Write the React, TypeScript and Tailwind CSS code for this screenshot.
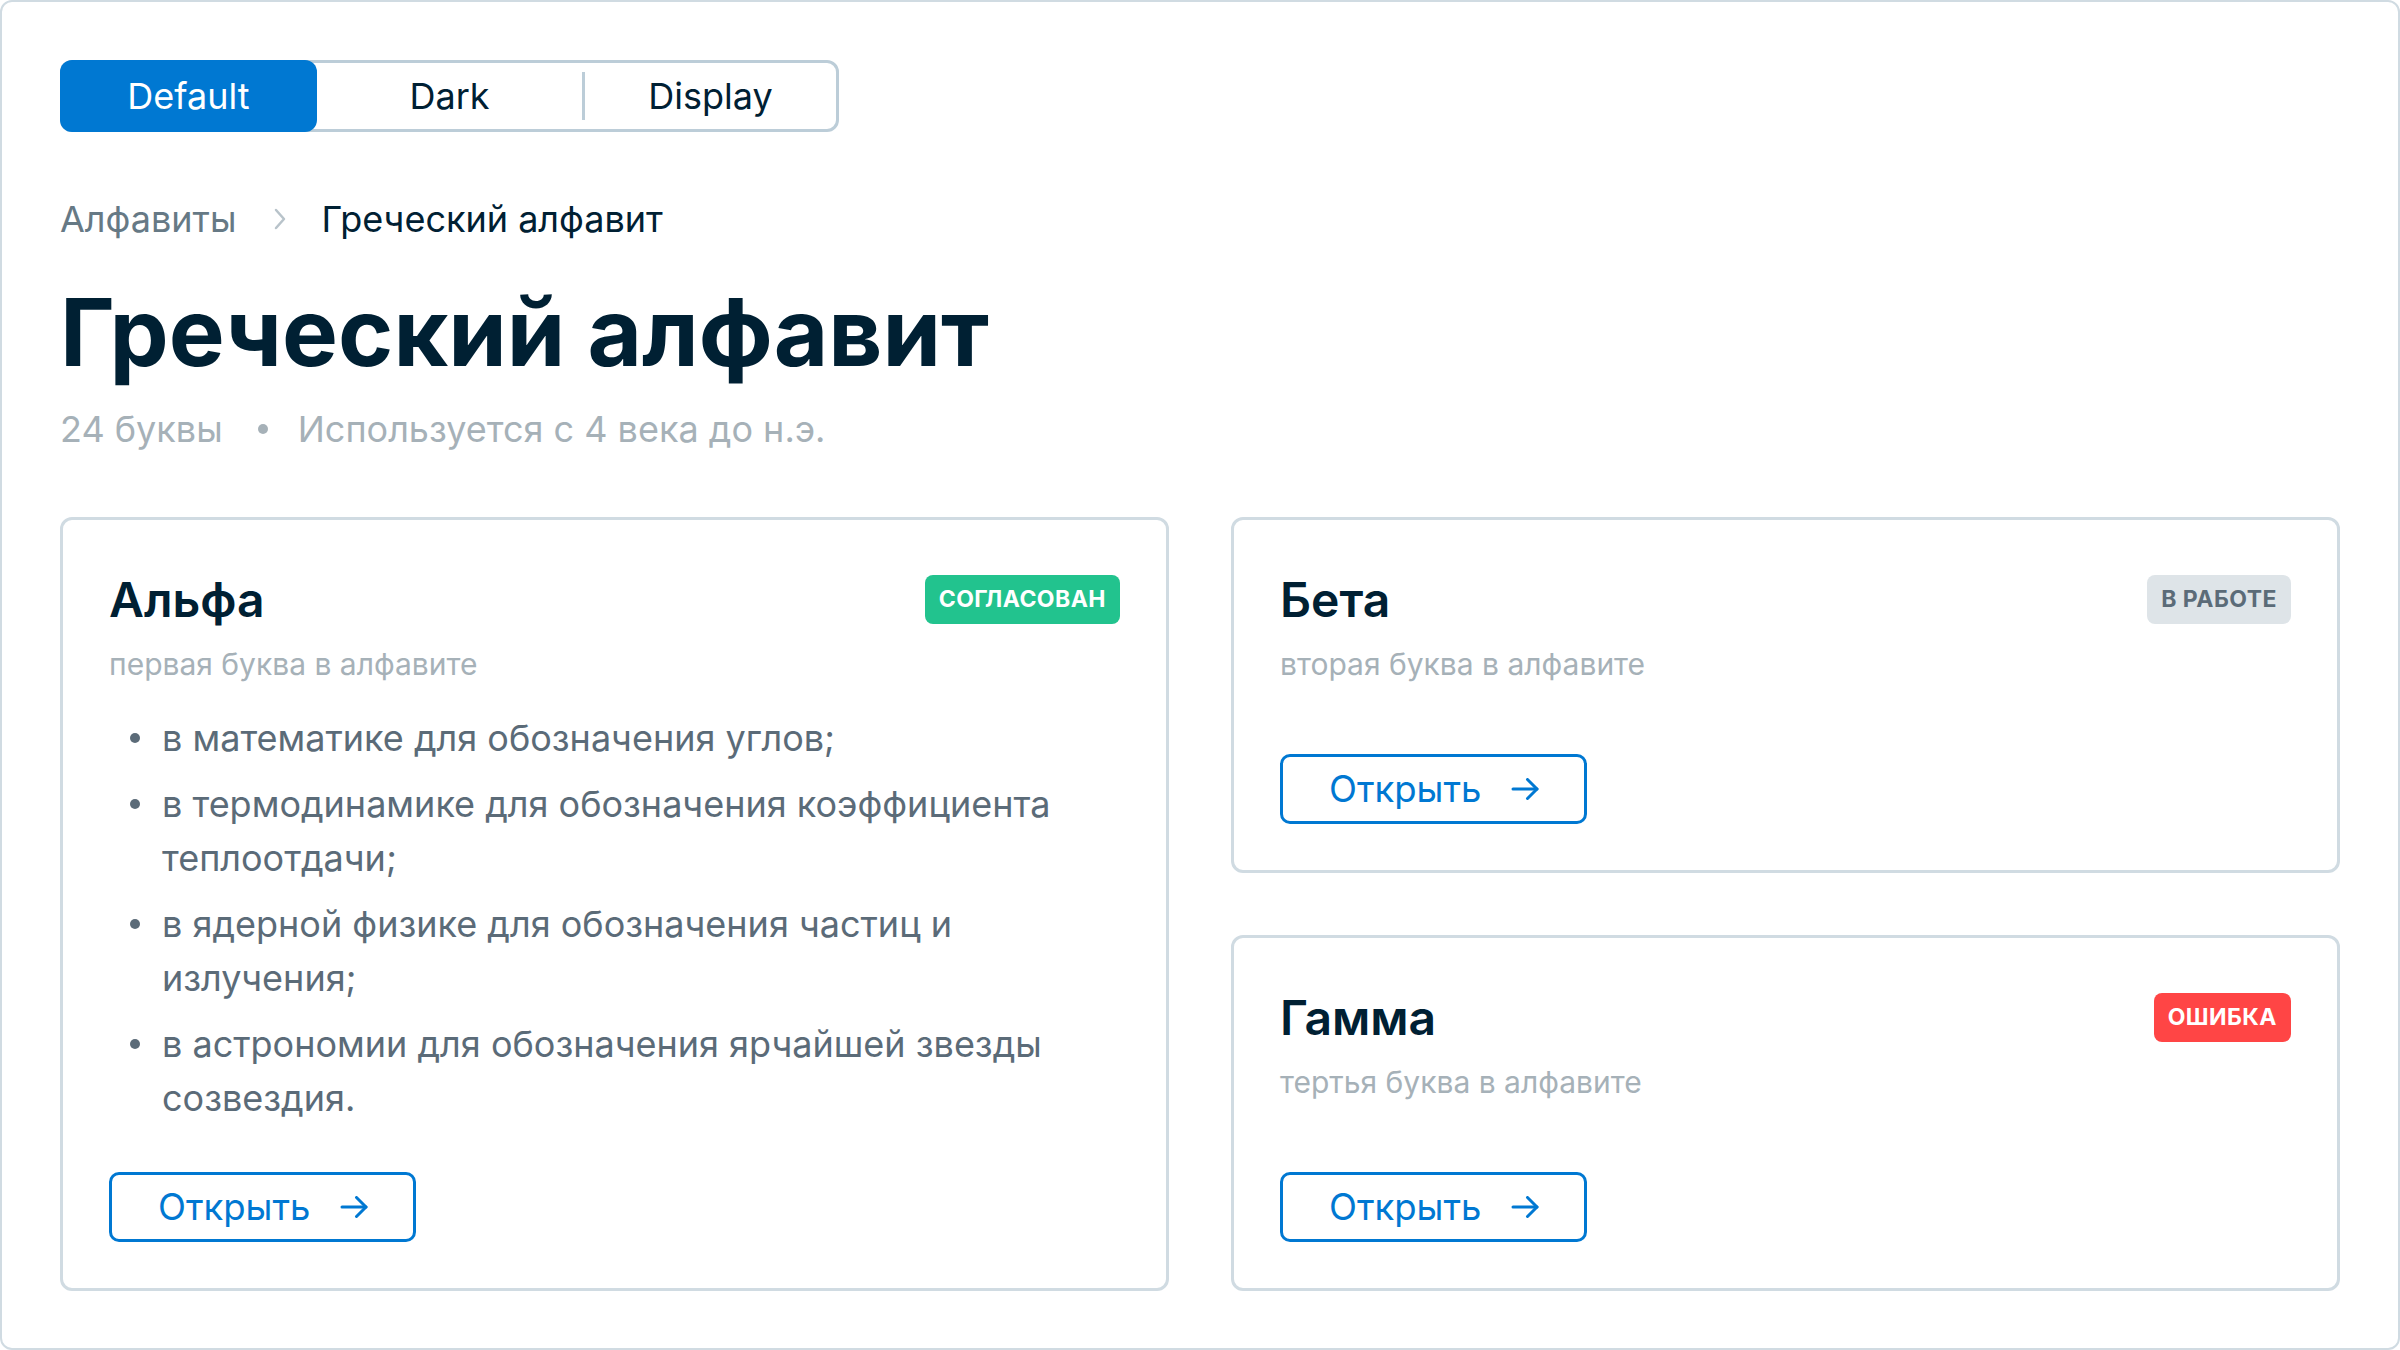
import React from 'react';

type Status = 'ok' | 'work' | 'error';

const badgeStyles: Record<Status, string> = {
  ok: 'bg-[#22c38e] text-white',
  work: 'bg-[#dee4e8] text-[#5b6b78]',
  error: 'bg-[#ff4545] text-white',
};

function Badge({ status, children }: { status: Status; children: React.ReactNode }) {
  return (
    <span
      className={`flex h-[49px] items-center rounded-[8px] px-[14px] text-[23px] font-bold uppercase tracking-[0.02em] ${badgeStyles[status]}`}
    >
      {children}
    </span>
  );
}

function ArrowIcon() {
  return (
    <svg width="28" height="22" viewBox="0 0 28 22" fill="none" stroke="currentColor" strokeWidth="3" strokeLinecap="round" strokeLinejoin="round">
      <path d="M2 11H26" />
      <path d="M16.5 1.5L26 11L16.5 20.5" />
    </svg>
  );
}

function OpenButton({ className = '' }: { className?: string }) {
  return (
    <button
      className={`flex h-[70px] w-fit items-center gap-[30px] rounded-[10px] border-[3px] border-[#0078d2] pl-[46px] pr-[45px] text-[36.5px] text-[#0078d2] ${className}`}
    >
      <span>Открыть</span>
      <ArrowIcon />
    </button>
  );
}

function CardHeader({ title, subtitle, status, label }: { title: string; subtitle: string; status: Status; label: string }) {
  return (
    <>
      <div className="flex items-center justify-between">
        <h2 className="text-[48px] font-semibold leading-[67px] text-[#002033]">{title}</h2>
        <Badge status={status}>{label}</Badge>
      </div>
      <p className="mt-[10px] text-[30px] leading-[42px] text-[#a6b1b8]">{subtitle}</p>
    </>
  );
}

const uses = [
  'в математике для обозначения углов;',
  'в термодинамике для обозначения коэффициента теплоотдачи;',
  'в ядерной физике для обозначения частиц и излучения;',
  'в астрономии для обозначения ярчайшей звезды созвездия.',
];

export default function App() {
  return (
    <div className="h-[1350px] w-[2400px] rounded-[12px] border-2 border-[#d0dbe2] bg-white px-[58px] pt-[58px] font-['Inter',sans-serif]">
      {/* Theme switch */}
      <div className="flex h-[72px] w-[779px] items-center rounded-[12px] border-[3px] border-[#bccdd8]">
        <button className="-my-[3px] -ml-[3px] flex h-[72px] w-[257px] items-center justify-center rounded-[12px] bg-[#0078d2] text-[36px] text-white">
          Default
        </button>
        <button className="flex h-full w-[265px] items-center justify-center text-[36px] text-[#002033]">Dark</button>
        <div className="h-[48px] w-[3px] bg-[#bccdd8]" />
        <button className="flex h-full flex-1 items-center justify-center text-[36px] text-[#002033]">Display</button>
      </div>

      {/* Breadcrumbs */}
      <nav className="mt-[60px] flex items-center text-[36px] leading-[54px]">
        <span className="text-[#667985]">Алфавиты</span>
        <svg className="ml-[37px] mr-[34px]" width="14" height="24" viewBox="0 0 14 24" fill="none" stroke="#b8c3ca" strokeWidth="2.5" strokeLinecap="round" strokeLinejoin="round">
          <path d="M3 3L11 12L3 21" />
        </svg>
        <span className="text-[#002033]">Греческий алфавит</span>
      </nav>

      <h1 className="mt-[29px] text-[94px] font-bold leading-[115px] text-[#002033]">Греческий алфавит</h1>
      <div className="mt-[12px] flex items-center text-[36px] leading-[54px] text-[#a6b1b8]">
        <span>24 буквы</span>
        <span className="ml-[35px] mr-[30px] h-[10px] w-[10px] rounded-full bg-[#a6b1b8]" />
        <span>Используется с 4 века до н.э.</span>
      </div>

      {/* Cards */}
      <div className="mt-[61px] grid grid-cols-2 gap-[62px]">
        <div className="flex flex-col rounded-[12px] border-[3px] border-[#d0dbe2] p-[46px]">
          <CardHeader title="Альфа" subtitle="первая буква в алфавите" status="ok" label="Согласован" />
          <ul className="mt-[26px] flex flex-col gap-[12px] text-[36px] leading-[54px] text-[#5b6b78]">
            {uses.map((u) => (
              <li key={u} className="flex">
                <span className="ml-[21px] mr-[22px] mt-[22px] h-[10px] w-[10px] shrink-0 rounded-full bg-[#5b6b78]" />
                <span>{u}</span>
              </li>
            ))}
          </ul>
          <OpenButton className="mt-[47px]" />
        </div>

        <div className="flex flex-col gap-[62px]">
          <div className="flex flex-1 flex-col rounded-[12px] border-[3px] border-[#d0dbe2] p-[46px]">
            <CardHeader title="Бета" subtitle="вторая буква в алфавите" status="work" label="В работе" />
            <OpenButton className="mt-auto" />
          </div>
          <div className="flex flex-1 flex-col rounded-[12px] border-[3px] border-[#d0dbe2] p-[46px]">
            <CardHeader title="Гамма" subtitle="тертья буква в алфавите" status="error" label="Ошибка" />
            <OpenButton className="mt-auto" />
          </div>
        </div>
      </div>
    </div>
  );
}
